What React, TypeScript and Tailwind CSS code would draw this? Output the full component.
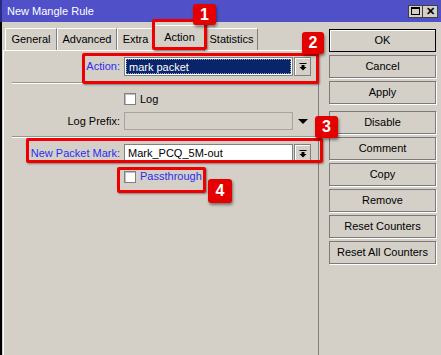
import React from 'react'

const FONT = 'font-["Liberation_Sans",Arial,sans-serif]'

function DropButton() {
  return (
    <div className="w-[17px] h-[19px] flex items-center justify-center bg-[#d4d0c8] border border-[#808080] shadow-[inset_1px_1px_0_#fff]">
      <svg width="8" height="8" viewBox="0 0 8 8">
        <rect x="0.5" y="0" width="7" height="1" fill="#000" />
        <rect x="2.5" y="2" width="3" height="2" fill="#000" />
        <polygon points="0.5,4 7.5,4 4,7.5" fill="#000" />
      </svg>
    </div>
  )
}

function Checkbox() {
  return <div className="w-[12px] h-[12px] bg-white border border-[#808080] shadow-[inset_1px_1px_0_#c0c0c0]" />
}

function Separator() {
  return <div className="ml-[8px] mr-[2px] border-t border-[#9a968e] border-b border-b-white" />
}

function Tab({ label, width, active }: { label: string; width: string; active?: boolean }) {
  if (active) {
    return (
      <div className={`${width} h-[26px] -mb-[1px] relative z-10 flex items-center justify-center bg-[#d4d0c8] border-l border-t border-white border-r border-r-[#808080] pb-[2px]`}>
        {label}
      </div>
    )
  }
  return (
    <div className={`${width} h-[22px] flex items-center justify-center bg-[#d4d0c8] border-l border-t border-white border-r border-r-[#808080]`}>
      {label}
    </div>
  )
}

function SideButton({ label, main, className = '' }: { label: string; main?: boolean; className?: string }) {
  return (
    <div
      className={`h-[23px] w-[107px] flex items-center justify-center bg-[#d4d0c8] ${
        main ? 'border border-black shadow-[inset_1px_1px_0_#fff]' : 'border border-[#7a7a7a] shadow-[1px_1px_0_#fff]'
      } ${className}`}
    >
      {label}
    </div>
  )
}

function Badge({ n, className }: { n: string; className: string }) {
  return (
    <div
      className={`absolute z-30 flex items-center justify-center bg-[#e50000] text-white text-[16px] font-bold rounded-[3px] shadow-[1px_2px_3px_rgba(0,0,0,0.45)] ${className}`}
    >
      {n}
    </div>
  )
}

export default function App() {
  return (
    <div className={`relative w-[441px] h-[355px] overflow-hidden bg-[#d4d0c8] text-[11px] text-black ${FONT}`}>
      {/* title bar */}
      <div className="h-[22px] flex items-center justify-between bg-[#5050c8] border-l-2 border-[#2a2a80] pl-[5px] pr-[3px]">
        <span className="text-white text-[11px]">New Mangle Rule</span>
        <div className="flex">
          <div className="w-[15px] h-[13px] bg-[#d4d0c8] border border-[#404040] flex items-center justify-center">
            <div className="w-[9px] h-[8px] border border-black border-t-2" />
          </div>
          <div className="w-[15px] h-[13px] bg-[#d4d0c8] border border-[#404040] border-l-0 flex items-center justify-center text-[11px] font-bold leading-none">
            ✕
          </div>
        </div>
      </div>

      {/* body */}
      <div className="flex h-[333px] border-l-2 border-black">
        <div className="w-[317px] flex flex-col">
          {/* tabs */}
          <div className="h-[28px] flex items-end pl-[3px]">
            <Tab label="General" width="w-[52px]" />
            <Tab label="Advanced" width="w-[60px]" />
            <Tab label="Extra" width="w-[37px]" />
            <Tab label="Action" width="w-[51px]" active />
            <Tab label="Statistics" width="w-[53px]" />
          </div>

          {/* panel */}
          <div className="flex-1 ml-[1px] border-l border-t border-white border-r border-r-[#808080] pt-[6px]">
            <div className="flex items-center h-[19px]">
              <span className="w-[116px] text-right text-[#2d2df0]">Action:</span>
              <div className="ml-[4px] w-[169px] h-[19px] border border-[#808080] bg-white p-px">
                <div className="h-full bg-[#0a246a] border border-dotted border-[#8aa0d0] text-white pl-[2px] leading-[15px]">mark packet</div>
              </div>
              <div className="ml-[1px]">
                <DropButton />
              </div>
            </div>

            <div className="mt-[6px]">
              <Separator />
            </div>

            <div className="mt-[9px] flex items-center h-[12px]">
              <div className="ml-[120px]">
                <Checkbox />
              </div>
              <span className="ml-[4px]">Log</span>
            </div>

            <div className="mt-[7px] flex items-center h-[18px]">
              <span className="w-[116px] text-right">Log Prefix:</span>
              <div className="ml-[4px] w-[169px] h-[18px] border border-[#a8a49c] bg-[#d4d0c8]" />
              <svg className="ml-[5px]" width="10" height="5" viewBox="0 0 10 5">
                <polygon points="0,0 10,0 5,5" fill="#000" />
              </svg>
            </div>

            <div className="mt-[6px]">
              <Separator />
            </div>

            <div className="mt-[6px] flex items-center h-[19px]">
              <span className="w-[116px] text-right text-[#2d2df0]">New Packet Mark:</span>
              <div className="ml-[4px] w-[169px] h-[19px] border border-[#808080] bg-white pl-[3px] leading-[17px]">Mark_PCQ_5M-out</div>
              <div className="ml-[1px]">
                <DropButton />
              </div>
            </div>

            <div className="mt-[7px] flex items-center h-[13px]">
              <div className="ml-[120px]">
                <Checkbox />
              </div>
              <span className="ml-[4px] text-[#2d2df0]">Passthrough</span>
            </div>
          </div>
        </div>

        {/* right buttons */}
        <div className="ml-[10px] pt-[7px] flex flex-col gap-[3px]">
          <SideButton label="OK" main />
          <SideButton label="Cancel" />
          <SideButton label="Apply" />
          <SideButton label="Disable" className="mt-[4px]" />
          <SideButton label="Comment" />
          <SideButton label="Copy" />
          <SideButton label="Remove" />
          <SideButton label="Reset Counters" />
          <SideButton label="Reset All Counters" />
        </div>
      </div>

      {/* annotations */}
      <div className="absolute z-20 left-[152px] top-[19px] w-[55px] h-[31px] border-[3px] border-[#ee0000] rounded-[2px] shadow-[1px_1px_2px_rgba(0,0,0,0.4)]" />
      <div className="absolute z-20 left-[82px] top-[53px] w-[237px] h-[31px] border-[3px] border-[#ee0000] rounded-[2px] shadow-[1px_1px_2px_rgba(0,0,0,0.4)]" />
      <div className="absolute z-20 left-[26px] top-[138px] w-[297px] h-[25px] border-[3px] border-[#ee0000] rounded-[2px] shadow-[1px_1px_2px_rgba(0,0,0,0.4)]" />
      <div className="absolute z-20 left-[117px] top-[167px] w-[89px] h-[26px] border-[3px] border-[#ee0000] rounded-[2px] shadow-[1px_1px_2px_rgba(0,0,0,0.4)]" />

      <Badge n="1" className="left-[193px] top-[4px] w-[23px] h-[21px]" />
      <Badge n="2" className="left-[302px] top-[32px] w-[22px] h-[22px]" />
      <Badge n="3" className="left-[315px] top-[116px] w-[23px] h-[22px]" />
      <Badge n="4" className="left-[208px] top-[179px] w-[24px] h-[24px]" />
    </div>
  )
}
